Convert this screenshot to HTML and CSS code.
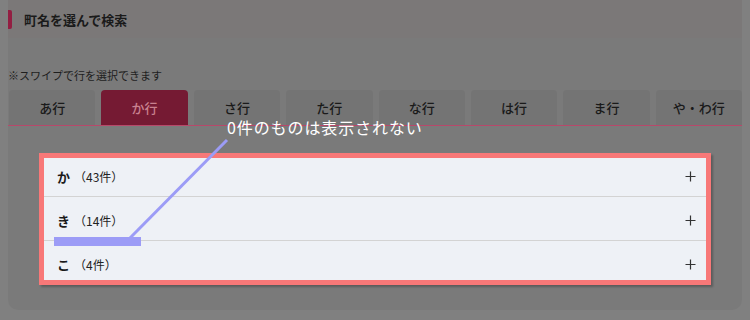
FILE: index.html
```html
<!DOCTYPE html>
<html lang="ja">
<head>
    <meta charset="UTF-8">
    <meta name="viewport" content="width=device-width, initial-scale=1.0">
    <title>町名を選んで検索</title>
    <link rel="stylesheet" href="styles.css">
</head>
<body>
    <div class="page">
        <div class="heading">
            <span class="heading-mark"></span>
            <h1>町名を選んで検索</h1>
        </div>
        <div class="panel">
            <p class="note">※スワイプで行を選択できます</p>
            <div class="tabs">
                <button class="tab">あ行</button>
                <button class="tab active">か行</button>
                <button class="tab">さ行</button>
                <button class="tab">た行</button>
                <button class="tab">な行</button>
                <button class="tab">は行</button>
                <button class="tab">ま行</button>
                <button class="tab">や・わ行</button>
            </div>
            <ul class="town-list">
                <li class="town-row">
                    <span class="town-kana">か</span>
                    <span class="town-count">（43件）</span>
                    <svg class="plus" width="11" height="11" viewBox="0 0 11 11"><path d="M5.5 0.5V10.5M0.5 5.5H10.5" stroke="#333" stroke-width="1.2" fill="none"/></svg>
                </li>
                <li class="town-row">
                    <span class="town-kana">き</span>
                    <span class="town-count">（14件）</span>
                    <svg class="plus" width="11" height="11" viewBox="0 0 11 11"><path d="M5.5 0.5V10.5M0.5 5.5H10.5" stroke="#333" stroke-width="1.2" fill="none"/></svg>
                </li>
                <li class="town-row">
                    <span class="town-kana">こ</span>
                    <span class="town-count">（4件）</span>
                    <svg class="plus" width="11" height="11" viewBox="0 0 11 11"><path d="M5.5 0.5V10.5M0.5 5.5H10.5" stroke="#333" stroke-width="1.2" fill="none"/></svg>
                </li>
            </ul>
        </div>
    </div>

    <!-- annotation -->
    <div class="callout">0件のものは表示されない</div>
    <svg class="callout-line" width="750" height="320" viewBox="0 0 750 320">
        <line x1="227" y1="140" x2="130" y2="238" stroke="#9c9cf6" stroke-width="3"/>
        <rect x="54" y="237" width="87" height="9" fill="#9c9cf6"/>
    </svg>
</body>
</html>
```

FILE: styles.css
```css
*, *:after, *:before {
    margin: 0;
    padding: 0;
    border: 0;
    box-sizing: border-box;
}

body {
    width: 750px;
    height: 320px;
    overflow: hidden;
    background: #808080;
    font-family: 'Noto Sans CJK JP', 'Noto Sans', sans-serif;
    color: #1e1e1e;
}

.page {
    padding: 0 8px;
}

.heading {
    height: 38px;
    display: flex;
    align-items: center;
    gap: 12px;
    background: #7b7878;
}

.heading-mark {
    width: 4px;
    height: 19px;
    border-radius: 0 2px 2px 0;
    background: #931e42;
}

.heading h1 {
    font-size: 13px;
    font-weight: 700;
    color: #1a1a1a;
}

.panel {
    height: 272px;
    padding-top: 29px;
    background: #7a7a7a;
    border-radius: 0 0 10px 10px;
}

.note {
    font-size: 11px;
    line-height: 16px;
    color: #1e1e1e;
}

.tabs {
    display: flex;
    gap: 6px;
    margin-top: 7px;
    padding-left: 1px;
    border-bottom: 1px solid #b8486a;
}

.tab {
    flex: 1;
    height: 35px;
    border-radius: 4px 4px 0 0;
    background: #747474;
    font-family: inherit;
    font-size: 13px;
    font-weight: 500;
    color: #1a1a1a;
}

.tab.active {
    background: #751a33;
    color: #c9818f;
}

.town-list {
    list-style: none;
    margin: 27px 31px 0;
    background: #eef1f6;
    outline: 5px solid #f87878;
    outline-offset: -5px;
    box-shadow: 2px 2px 2px rgba(0, 0, 0, 0.25);
}

.town-row {
    height: 44px;
    display: flex;
    align-items: center;
    padding: 3px 15px 0 18px;
    border-bottom: 1px solid #d3d3d3;
}

.town-row:last-child {
    border-bottom: 0;
}

.town-kana {
    font-size: 13px;
    font-weight: 700;
    color: #1a1a1a;
}

.town-count {
    margin-left: 4px;
    font-size: 12px;
    color: #222;
}

.plus {
    margin-left: auto;
}

.callout {
    position: absolute;
    left: 227px;
    top: 119px;
    font-size: 16px;
    line-height: 16px;
    letter-spacing: 0.9px;
    color: #fff;
}

.callout-line {
    position: absolute;
    left: 0;
    top: 0;
    pointer-events: none;
}
```
